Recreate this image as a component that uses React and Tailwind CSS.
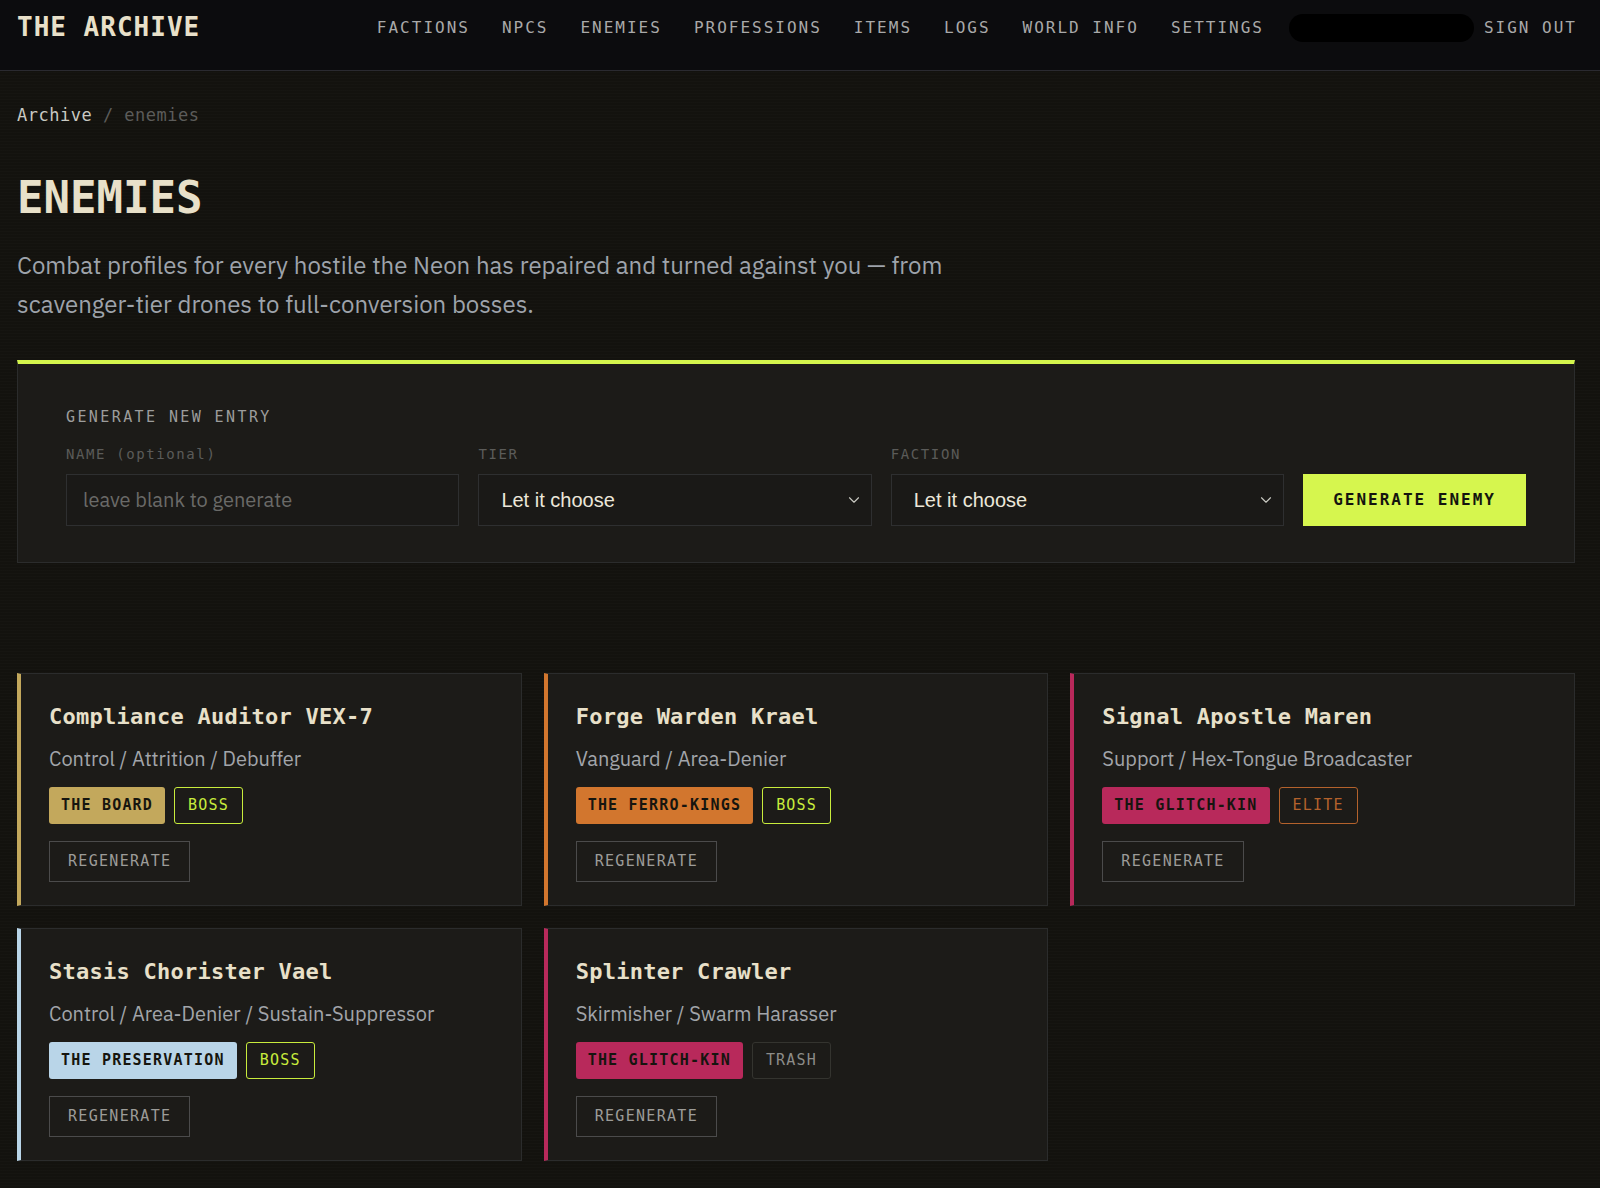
import React from 'react';
import { ChevronDown } from 'lucide-react';

const mono = "font-['DejaVu_Sans_Mono',monospace]";
const sans = "font-['IBM_Plex_Sans','Noto_Sans',sans-serif]";

const navLinks = ['Factions', 'NPCs', 'Enemies', 'Professions', 'Items', 'Logs', 'World Info', 'Settings'];

const enemies = [
    {
        name: 'Compliance Auditor VEX-7',
        role: 'Control / Attrition / Debuffer',
        faction: 'The Board',
        accent: 'border-l-[#c3a85c]',
        factionBg: 'bg-[#c3a85c]',
        tier: 'Boss',
    },
    {
        name: 'Forge Warden Krael',
        role: 'Vanguard / Area-Denier',
        faction: 'The Ferro-Kings',
        accent: 'border-l-[#d2762e]',
        factionBg: 'bg-[#d2762e]',
        tier: 'Boss',
    },
    {
        name: 'Signal Apostle Maren',
        role: 'Support / Hex-Tongue Broadcaster',
        faction: 'The Glitch-Kin',
        accent: 'border-l-[#b8295b]',
        factionBg: 'bg-[#b8295b]',
        tier: 'Elite',
    },
    {
        name: 'Stasis Chorister Vael',
        role: 'Control / Area-Denier / Sustain-Suppressor',
        faction: 'The Preservation',
        accent: 'border-l-[#b9d5e8]',
        factionBg: 'bg-[#b9d5e8]',
        tier: 'Boss',
    },
    {
        name: 'Splinter Crawler',
        role: 'Skirmisher / Swarm Harasser',
        faction: 'The Glitch-Kin',
        accent: 'border-l-[#b8295b]',
        factionBg: 'bg-[#b8295b]',
        tier: 'Trash',
    },
];

const tierStyles = {
    Boss: 'border-[#c8ec3c] text-[#c8ec3c]',
    Elite: 'border-[#b4622c] text-[#b4622c]',
    Trash: 'border-[#34342f] text-[#8c8c88]',
};

const EnemyCard = ({ enemy }) => (
    <div className={`border border-[#2b2c2c] border-l-4 ${enemy.accent} bg-[#1c1b18] pl-7 pr-7 pt-7 pb-[23px]`}>
        <h3 className={`${mono} text-[22px] font-bold leading-[29px] tracking-[0.25px] text-[#e8e0c9]`}>{enemy.name}</h3>
        <p className={`${sans} mt-[14px] text-[20px] leading-[27px] text-[#a2a5aa]`}>{enemy.role}</p>
        <div className="mt-[15px] flex items-center gap-[9px]">
            <span className={`${mono} ${enemy.factionBg} flex h-[37px] items-center rounded-[3px] px-3 text-[15px] font-bold tracking-[1.2px] text-[#16150f] uppercase`}>
                {enemy.faction}
            </span>
            <span className={`${mono} ${tierStyles[enemy.tier]} flex h-[37px] items-center rounded-[3px] border px-[13px] text-[15px] tracking-[1.2px] uppercase`}>
                {enemy.tier}
            </span>
        </div>
        <button className={`${mono} mt-[17px] flex h-[41px] items-center border border-[#4b4b4b] px-[18px] text-[15px] tracking-[1.3px] text-[#9c9c98]`}>
            REGENERATE
        </button>
    </div>
);

const App = () => {
    return (
        <div className="min-h-[1188px] bg-[#13120e] bg-[repeating-linear-gradient(0deg,rgba(255,255,255,0.012)_0px,rgba(255,255,255,0.012)_1px,transparent_1px,transparent_3px)]">
            {/* Top bar */}
            <header className="flex h-[71px] items-center justify-between border-b border-[#2a2a30] bg-[#0c0c0e] pb-[15px] pl-[17px] pr-[23px]">
                <div className={`${mono} text-[26px] font-bold tracking-[1px] text-[#e8e0c9]`}>THE ARCHIVE</div>
                <nav className="flex items-center">
                    <div className="flex items-center gap-8">
                        {navLinks.map((link) => (
                            <a key={link} className={`${mono} text-[16px] tracking-[2px] text-[#a9a9a9] uppercase`}>
                                {link}
                            </a>
                        ))}
                    </div>
                    <span className="ml-[25px] h-[28px] w-[185px] rounded-full bg-black" />
                    <a className={`${mono} ml-[10px] text-[16px] tracking-[2px] text-[#a9a9a9]`}>SIGN OUT</a>
                </nav>
            </header>

            <main className="pl-[17px] pr-[25px]">
                {/* Breadcrumb */}
                <div className={`${mono} pt-[32px] text-[17px] leading-[24px] tracking-[0.5px]`}>
                    <span className="text-[#c9c9c2]">Archive</span>
                    <span className="text-[#5c5c5a]"> / enemies</span>
                </div>

                <h1 className={`${mono} mt-[45px] text-[44px] font-bold leading-[52px] text-[#e8e0c9]`}>ENEMIES</h1>
                <p className={`${sans} mt-[22px] max-w-[990px] text-[24px] leading-[39px] text-[#9ea3ab]`}>
                    Combat profiles for every hostile the Neon has repaired and turned against you — from scavenger-tier drones to full-conversion bosses.
                </p>

                {/* Generator */}
                <section className="mt-[36px] border border-t-4 border-[#2b2c2c] border-t-[#d4f54c] bg-[#1c1b18] px-12 pt-[42px] pb-[36px]">
                    <div className={`${mono} text-[15px] tracking-[2.4px] text-[#9c9d9c]`}>GENERATE NEW ENTRY</div>
                    <div className="mt-[15px] grid grid-cols-[1fr_1fr_1fr_auto] items-end gap-x-[19px]">
                        <label className="flex flex-col">
                            <span className={`${mono} text-[14px] tracking-[1.6px] text-[#5b5b59]`}>NAME (optional)</span>
                            <input
                                placeholder="leave blank to generate"
                                className={`${sans} mt-[9px] h-[52px] border border-[#2e2f30] bg-[#1a1917] px-4 text-[20px] text-[#e8e4d8] placeholder:text-[#6a6a68] outline-none`}
                            />
                        </label>
                        {['TIER', 'FACTION'].map((label) => (
                            <label key={label} className="flex flex-col">
                                <span className={`${mono} text-[14px] tracking-[1.6px] text-[#5b5b59]`}>{label}</span>
                                <div className="mt-[9px] flex h-[52px] items-center justify-between border border-[#2e2f30] bg-[#1a1917] pl-[22px] pr-[8px]">
                                    <span className="font-['Liberation_Sans',Arial,sans-serif] text-[20px] text-[#ece7da]">Let it choose</span>
                                    <ChevronDown className="h-[18px] w-[18px] text-[#c9c9c2]" strokeWidth={1.5} />
                                </div>
                            </label>
                        ))}
                        <button className={`${mono} h-[52px] bg-[#d6f64e] px-[30px] text-[16px] font-bold tracking-[2px] text-[#14140f]`}>
                            GENERATE ENEMY
                        </button>
                    </div>
                </section>

                {/* Cards */}
                <div className="mt-[110px] grid grid-cols-3 gap-x-[22px] gap-y-[22px] pb-[28px]">
                    {enemies.map((enemy) => (
                        <EnemyCard key={enemy.name} enemy={enemy} />
                    ))}
                </div>
            </main>
        </div>
    );
};

export default App;
